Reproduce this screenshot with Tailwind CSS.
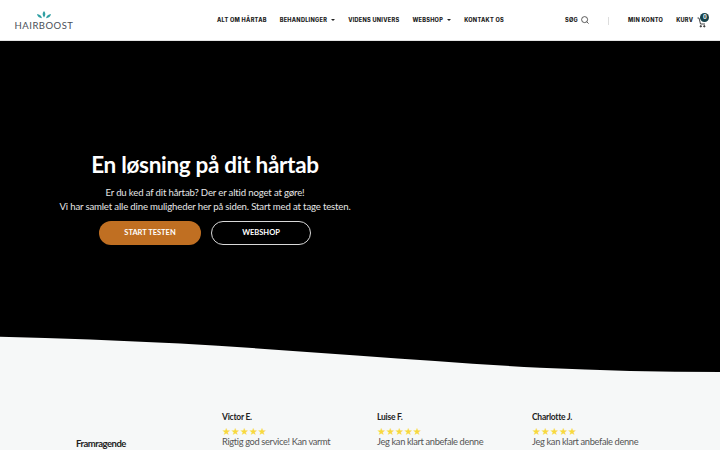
<!DOCTYPE html>
<html lang="da">
<head>
    <meta charset="UTF-8">
    <meta name="viewport" content="width=device-width, initial-scale=1.0">
    <title>Hairboost</title>
    <script src="https://cdn.jsdelivr.net/npm/@tailwindcss/browser@4"></script>
</head>
<body class="h-[450px] overflow-hidden bg-[#f6f8f8] font-['Lato','Open_Sans',sans-serif]">
    <!-- header -->
    <header class="flex h-[41px] items-center whitespace-nowrap border-b border-[#e4e4e4] bg-white pt-[1px] text-[5.600px] font-extrabold tracking-[0.26px] text-[#222] font-['Inter',sans-serif]">
        <a href="#" class="ml-[15px] flex w-[58px] flex-col items-center">
            <svg width="20" height="9" viewBox="0 0 20 9">
                <path d="M10 0C8.200 2 8.200 4 10 6.500C11.800 4 11.800 2 10 0Z" fill="#2f9fa3"/>
                <path d="M3 3C3.500 5.800 5.200 7 8 7.200C7.400 4.600 5.600 3.400 3 3Z" fill="#2f9fa3"/>
                <path d="M17 3C16.500 5.800 14.800 7 12 7.200C12.600 4.600 14.400 3.400 17 3Z" fill="#2f9fa3"/>
            </svg>
            <span class="mt-[1px] text-[9.500px] leading-[10px] font-normal tracking-[0.5px] text-[#4a5058] font-['Lato',sans-serif]">HAIRBOOST</span>
        </a>
        <nav class="ml-[144px] flex items-center gap-[13px]">
            <a href="#">ALT OM HÅRTAB</a>
            <a href="#" class="flex items-center gap-[4px]">BEHANDLINGER <span class="h-0 w-0 border-x-[2px] border-t-[2.500px] border-x-transparent border-t-[#222]"></span></a>
            <a href="#">VIDENS UNIVERS</a>
            <a href="#" class="flex items-center gap-[4px]">WEBSHOP <span class="h-0 w-0 border-x-[2px] border-t-[2.500px] border-x-transparent border-t-[#222]"></span></a>
            <a href="#">KONTAKT OS</a>
        </nav>
        <a href="#" class="ml-[61px] flex items-center gap-[3px]">
            SØG
            <svg width="8" height="8" viewBox="0 0 8 8" fill="none" stroke="#333" stroke-width="0.8"><circle cx="3.600" cy="3.600" r="3"/><path d="M5.800 5.800L7.600 7.600"/></svg>
        </a>
        <span class="ml-[19px] h-[8px] w-px bg-[#ddd]"></span>
        <a href="#" class="ml-[19px]">MIN KONTO</a>
        <a href="#" class="ml-[13px]">KURV</a>
        <span class="relative ml-[4px] h-[14px] w-[14px]">
            <svg width="10" height="11" viewBox="0 0 10 11" fill="none" stroke="#333" stroke-width="0.9" class="absolute left-0 top-[3px]"><path d="M0.500 1H2L3.500 7H8"/><circle cx="3.800" cy="9.300" r="0.700" fill="#333"/><circle cx="7.300" cy="9.300" r="0.700" fill="#333"/></svg>
            <span class="absolute left-[3px] top-[-1px] flex h-[9px] w-[9px] items-center justify-center rounded-full bg-[#16424a] text-[5.500px] font-bold tracking-normal text-white">0</span>
        </span>
    </header>

    <!-- hero -->
    <section class="relative h-[331px] bg-black">
        <div class="flex w-[410px] flex-col items-center pt-[110px] text-white">
            <h1 class="text-[22.500px] leading-[28px] font-bold tracking-[-0.3px]">En løsning på dit hårtab</h1>
            <p class="mt-[7px] text-center text-[9.600px] leading-[14px] tracking-[-0.16px] text-[#e6e6e6]">Er du ked af dit hårtab? Der er altid noget at gøre!<br>Vi har samlet alle dine muligheder her på siden. Start med at tage testen.</p>
            <div class="mt-[7px] flex gap-[10px]">
                <a href="#" class="flex h-[24px] w-[102px] items-center justify-center rounded-full bg-[#c06f22] text-[7.500px] font-bold text-white">START TESTEN</a>
                <a href="#" class="flex h-[24px] w-[100px] items-center justify-center rounded-full border border-[#d8d8d8] text-[7.500px] font-bold text-white">WEBSHOP</a>
            </div>
        </div>
        <!-- wave edge -->
        <svg class="absolute bottom-0 left-0" width="720" height="36" viewBox="0 0 720 36" preserveAspectRatio="none">
            <path d="M0 0.700C60 2 120 4.500 180 7.500C240 11 300 15.500 360 19.700C420 24 480 28.500 540 31.700C600 34.500 660 36 720 36V36H0Z" fill="#f6f8f8"/>
        </svg>
    </section>

    <!-- reviews -->
    <section class="flex">
        <div class="w-[222px] pl-[76px] pt-[66px] text-[9.500px] leading-[12px] font-bold tracking-[-0.5px] text-[#222]">Framragende</div>
        <div class="grid grid-cols-[155px_155px_155px] pt-[39px] text-[#222]">
            <article>
                <h3 class="text-[8.500px] leading-[12px] font-bold tracking-[-0.25px]">Victor E.</h3>
                <p class="mt-[5px] text-[10px] leading-[8px] text-[#f8d93e] font-['DejaVu_Sans',sans-serif]">★★★★★</p>
                <p class="text-[9.300px] leading-[12px] tracking-[-0.35px] text-[#555]">Rigtig god service! Kan varmt</p>
            </article>
            <article>
                <h3 class="text-[8.500px] leading-[12px] font-bold tracking-[-0.25px]">Luise F.</h3>
                <p class="mt-[5px] text-[10px] leading-[8px] text-[#f8d93e] font-['DejaVu_Sans',sans-serif]">★★★★★</p>
                <p class="text-[9.300px] leading-[12px] tracking-[-0.35px] text-[#555]">Jeg kan klart anbefale denne</p>
            </article>
            <article>
                <h3 class="text-[8.500px] leading-[12px] font-bold tracking-[-0.25px]">Charlotte J.</h3>
                <p class="mt-[5px] text-[10px] leading-[8px] text-[#f8d93e] font-['DejaVu_Sans',sans-serif]">★★★★★</p>
                <p class="text-[9.300px] leading-[12px] tracking-[-0.35px] text-[#555]">Jeg kan klart anbefale denne</p>
            </article>
        </div>
    </section>
</body>
</html>
